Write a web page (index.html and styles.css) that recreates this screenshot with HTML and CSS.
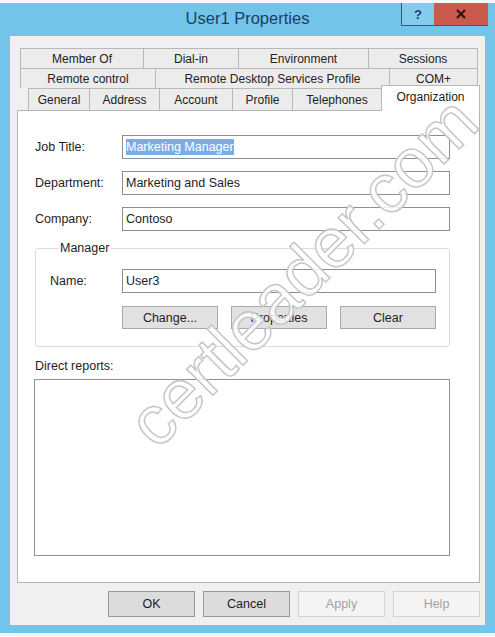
FILE: index.html
```html
<!DOCTYPE html>
<html lang="en">
<head>
  <meta charset="UTF-8">
  <title>User1 Properties</title>
  <link rel="stylesheet" href="styles.css">
</head>
<body>

  <div class="window">
    <!-- title bar -->
    <div class="titlebar">
      <span class="title">User1 Properties</span>
      <div class="caption-buttons">
        <span class="cap cap-help">?</span>
        <span class="cap cap-close">
          <svg width="10" height="10" viewBox="0 0 10 10"><path d="M1 1 L9 9 M9 1 L1 9" stroke="#2b1414" stroke-width="2.2" fill="none"/></svg>
        </span>
      </div>
    </div>

    <div class="client">
      <!-- tabs -->
      <div class="tabs">
        <div class="tab-row row-1">
          <div class="tab">Member Of</div>
          <div class="tab">Dial-in</div>
          <div class="tab">Environment</div>
          <div class="tab">Sessions</div>
        </div>
        <div class="tab-row row-2">
          <div class="tab">Remote control</div>
          <div class="tab">Remote Desktop Services Profile</div>
          <div class="tab">COM+</div>
        </div>
        <div class="tab-row row-3">
          <div class="tab">General</div>
          <div class="tab">Address</div>
          <div class="tab">Account</div>
          <div class="tab">Profile</div>
          <div class="tab">Telephones</div>
          <div class="tab active">Organization</div>
        </div>
      </div>

      <!-- Organization page -->
      <div class="panel">
        <div class="fields">
          <label>Job Title:</label>
          <div class="textbox"><span class="selected">Marketing Manager</span></div>
          <label>Department:</label>
          <div class="textbox">Marketing and Sales</div>
          <label>Company:</label>
          <div class="textbox">Contoso</div>
        </div>

        <fieldset class="manager">
          <legend>Manager</legend>
          <div class="manager-grid">
            <label>Name:</label>
            <div class="textbox">User3</div>
            <div class="manager-buttons">
              <button class="btn">Change...</button>
              <button class="btn">Properties</button>
              <button class="btn">Clear</button>
            </div>
          </div>
        </fieldset>

        <div class="reports-label">Direct reports:</div>
        <div class="listbox"></div>
      </div>

      <!-- dialog buttons -->
      <div class="dialog-buttons">
        <button class="btn btn-dialog">OK</button>
        <button class="btn btn-dialog">Cancel</button>
        <button class="btn btn-dialog disabled">Apply</button>
        <button class="btn btn-dialog disabled">Help</button>
      </div>
    </div>

    <div class="watermark">certleader.com</div>
  </div>

</body>
</html>
```

FILE: styles.css
```css
* { margin: 0; padding: 0; box-sizing: border-box; }

body {
  font-family: 'Liberation Sans', Arial, sans-serif;
  font-size: 12px;
  color: #1e1e1e;
  background: #f4f8fa;
  padding-top: 3px;
  width: 495px;
  height: 637px;
  overflow: hidden;
}

/* window frame */
.window {
  position: relative;
  width: 495px;
  height: 630px;
  background: #72c5e9;
  padding: 0 10px 8px 10px;
  display: flex;
  flex-direction: column;
}

.titlebar {
  height: 33px;
  display: flex;
  align-items: center;
  justify-content: center;
}

.title {
  font-size: 16.5px;
  color: #1d3d68;
  margin-top: -2px;
}

.caption-buttons {
  position: absolute;
  top: 0;
  right: 7px;
  display: flex;
  height: 23px;
}

.cap {
  display: flex;
  align-items: center;
  justify-content: center;
  height: 23px;
}

.cap-help {
  width: 33px;
  background: #82cdee;
  border-left: 1px solid #2d5f80;
  border-bottom: 1px solid #2d5f80;
  font-weight: bold;
  font-size: 13px;
  color: #1f3f6a;
}

.cap-close {
  width: 54px;
  background: #c95a4c;
  border-bottom: 1px solid #8a3a30;
}

.client {
  flex: 1;
  background: #f0f0f0;
  padding: 12px 5px 8px 7px;
}

/* tabs */
.tabs {
  display: flex;
  flex-direction: column;
}

.tab-row {
  display: grid;
  height: 20px;
  margin-left: 4px;
}

.row-1 { grid-template-columns: 123px 95px 130px 109px; }
.row-2 { grid-template-columns: 135px 234px 88px; }
.row-3 {
  grid-template-columns: 61px 70px 73px 60px 89px 98px;
  margin-left: 12px;
  height: 22px;
}

.tab {
  display: flex;
  align-items: center;
  justify-content: center;
  margin-left: -1px;
  background: #ececec;
  border: 1px solid #b9b9b9;
  border-bottom: none;
  color: #222;
  white-space: nowrap;
}

.tab.active {
  position: relative;
  z-index: 1;
  margin-top: -3px;
  margin-bottom: -1px;
  padding-bottom: 3px;
  background: #fff;
}

/* page */
.panel {
  height: 473px;
  background: #fff;
  border: 1px solid #b4b4b4;
  padding: 24px 29px 0 17px;
}

label, legend, .reports-label {
  font-size: 12.5px;
  line-height: 14px;
}

.fields {
  display: grid;
  grid-template-columns: 87px 1fr;
  row-gap: 12px;
  align-items: center;
}

.textbox {
  height: 24px;
  display: flex;
  align-items: center;
  padding: 0 3px;
  background: #fff;
  border: 1px solid #8e8e8e;
  font-size: 12.5px;
  white-space: nowrap;
}

.selected {
  background: #78aee8;
  color: #fff;
  padding: 1px 0;
}

.manager {
  margin-top: 10px;
  border: 1px solid #d9dde1;
  border-radius: 3px;
  padding: 14px 13px 17px 14px;
}

.manager legend {
  margin-left: 8px;
  padding: 0 2px;
}

.manager-grid {
  display: grid;
  grid-template-columns: 72px 1fr;
  align-items: center;
}

.manager-buttons {
  grid-column: 2;
  display: flex;
  justify-content: space-between;
  margin-top: 13px;
}

.btn {
  font-family: inherit;
  font-size: 12.5px;
  color: #1e1e1e;
  width: 96px;
  height: 23px;
  background: #e1e1e1;
  border: 1px solid #a9a9a9;
}

.reports-label {
  margin-top: 12px;
}

.listbox {
  margin: 6px 0 0 -1px;
  height: 177px;
  border: 1px solid #929292;
  background: #fff;
}

.dialog-buttons {
  display: flex;
  justify-content: flex-end;
  gap: 8px;
  margin-top: 8px;
}

.btn-dialog {
  width: 87px;
  height: 26px;
  background: #dcdcdc;
  border-color: #9a9a9a;
}

.btn-dialog.disabled {
  background: #f4f4f4;
  border-color: #d2d2d2;
  color: #a3a3a3;
}

/* watermark over the picture */
.watermark {
  position: absolute;
  left: 303px;
  top: 269px;
  transform: translate(-50%, -50%) rotate(-45deg);
  font-size: 70px;
  line-height: 0.9;
  color: rgba(255, 255, 255, 0.85);
  -webkit-text-stroke: 1.5px #c6c6c6;
  white-space: nowrap;
  pointer-events: none;
  z-index: 5;
}
```
